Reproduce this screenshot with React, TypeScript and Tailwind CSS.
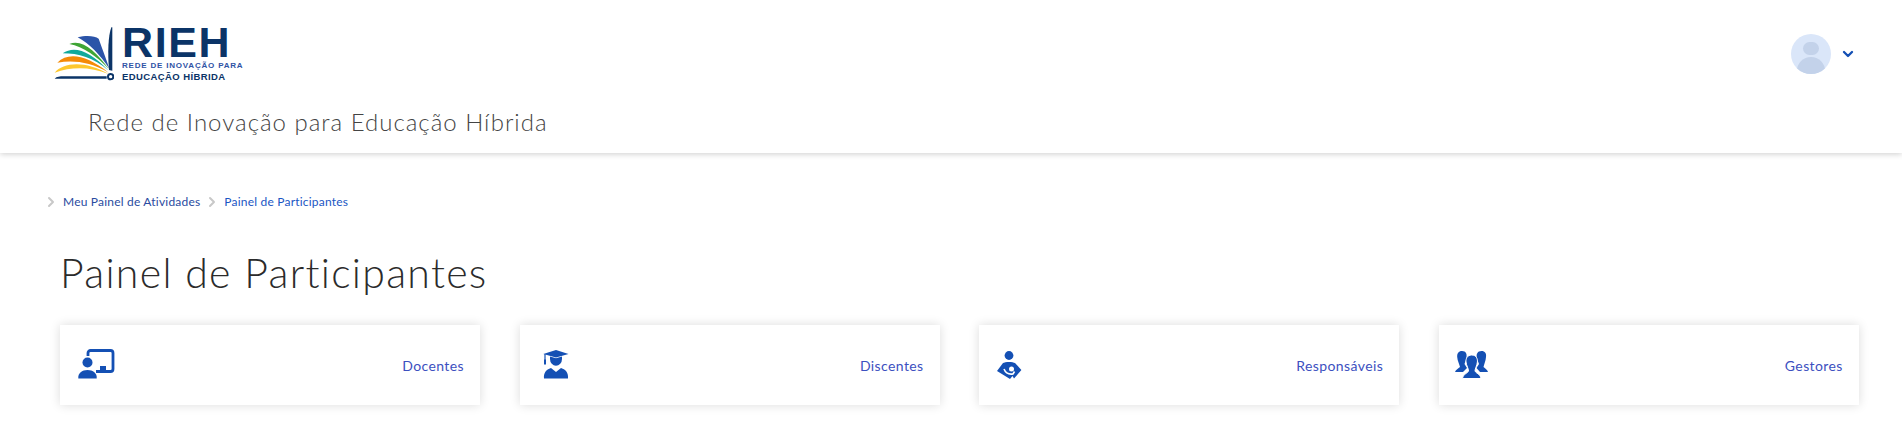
import { ChevronDown, ChevronRight } from 'lucide-react';
import type { ReactNode } from 'react';

const Logo = () => (
  <div className="flex items-start">
    <svg width="74" height="70" viewBox="0 0 222 210" className="shrink-0">
      <path d="M44 158 C70 125 140 122 206 162 C150 140 95 140 44 158Z" fill="#fdc82f" />
      <path d="M52 128 C85 95 140 105 206 158 C150 125 100 120 52 128Z" fill="#f58a07" />
      <path d="M68 100 C105 75 150 95 206 152 C160 112 115 100 68 100Z" fill="#12a99b" />
      <path d="M88 72 C125 55 170 95 207 148 C170 108 130 80 88 72Z" fill="#3fa535" />
      <path d="M113 52 C140 45 165 48 176 56 C188 90 200 120 208 146 C180 105 150 72 113 52Z" fill="#2b54a8" />
      <path d="M207 150 C203 100 204 50 214 22 L217 22 L217 152Z" fill="#0b3467" />
      <path d="M44 176 C50 170 60 169 70 169 L200 169 L200 176Z" fill="#0b3467" />
      <circle cx="212" cy="170" r="8" fill="#fff" stroke="#0b3467" strokeWidth="6" />
    </svg>
    <div className="mt-[2px] ml-[8px] flex w-[104px] flex-col font-['Liberation_Sans',sans-serif] text-[#0b3467]">
      <span className="h-[38px] text-[43px] leading-[40px] font-bold tracking-[1.6px]">RIEH</span>
      <span className="mt-[1px] text-[8px] leading-[9px] font-bold tracking-[0.8px] whitespace-nowrap text-[#2f53a5]">
        REDE DE INOVAÇÃO PARA
      </span>
      <span className="mt-[2px] text-[9.5px] leading-[10px] font-bold tracking-[0.4px] whitespace-nowrap">
        EDUCAÇÃO HÍBRIDA
      </span>
    </div>
  </div>
);

const DocentesIcon = () => (
  <svg width="40" height="32" viewBox="0 0 40 32" fill="#1450b4">
    <path d="M12 7 V4 a2.5 2.5 0 0 1 2.5-2.5 H34.5 a2.5 2.5 0 0 1 2.5 2.5 V20 a2.5 2.5 0 0 1-2.5 2.5 H20" fill="none" stroke="#1450b4" strokeWidth="2.8" />
    <rect x="24" y="17" width="6" height="5" />
    <circle cx="11.5" cy="13.5" r="5" />
    <path d="M2.3 29.5 C1.8 24 6 21 11.5 21 C17 21 21.2 24 20.7 29.5Z" />
  </svg>
);

const DiscentesIcon = () => (
  <svg width="40" height="32" viewBox="0 0 40 32" fill="#1450b4">
    <path d="M7.3 5 L20 1 L32.5 5 L20 8.5Z" />
    <path d="M14 7.5 L20 9.2 L26 7.5 V10 A6 6.8 0 0 1 14 10Z" />
    <rect x="8.4" y="5" width="1.2" height="6" />
    <rect x="8" y="10.5" width="2" height="5" />
    <path d="M8 29.5 C7.5 24 10 20.5 15 19 L20 23 L25 19 C30 20.5 32.5 24 32 29.5Z" />
  </svg>
);

const ResponsaveisIcon = () => (
  <svg width="40" height="32" viewBox="0 0 40 32" fill="#1450b4">
    <circle cx="14" cy="6.5" r="4.4" />
    <path d="M8 14 C10 12.5 18 12.5 20 14 L26.4 21 L19 29.5 L17.5 27 L15 30 L2 22Z" />
    <circle cx="16.5" cy="20" r="2.5" fill="#fff" />
    <path d="M9 20 C11 25 15 25.5 18 25 L19.5 22.5" fill="none" stroke="#fff" strokeWidth="1.6" />
  </svg>
);

const GestoresIcon = () => (
  <svg width="40" height="32" viewBox="0 0 40 32" fill="#1450b4">
    <path d="M7 2 C11 2 12 5 11.5 8 C11.2 11 10 13 9.5 15 L12 19 L8 23 H0 C0.5 20.5 3.5 19.5 5 18 C4.5 15.5 2.5 12 2.2 8 C2 4.5 3.5 2 7 2Z" />
    <path d="M26.5 2 C30 2 31.5 4.5 31 8 C30.7 12 29 15.5 28.5 18 C30 19.5 32.5 20.5 33 23 H25 L21.5 19 L24 15 C23.5 13 22 11 21.7 8 C21.3 5 22.5 2 26.5 2Z" />
    <path d="M16.7 6 C21.5 6 22.7 10 22.4 13 C22 17 20 19.5 20 22 C21 24.5 25.5 25 26 29.5 H7.5 C8 25 12.5 24.5 13.5 22 C13.5 19.5 11.5 17 11 13 C10.7 10 12 6 16.7 6Z" stroke="#fff" strokeWidth="1" />
  </svg>
);

type CardProps = {
  icon: ReactNode;
  label: string;
};

const Card = ({ icon, label }: CardProps) => (
  <div className="flex h-[80px] w-[420px] items-center justify-between bg-white pr-4 pl-4 shadow-[0_0_10px_rgba(0,0,0,0.14)]">
    <div className="mt-[-1px]">{icon}</div>
    <span className="text-[14px] tracking-[0.4px] text-[#3c50c0]">{label}</span>
  </div>
);

export default function App() {
  return (
    <div className="h-[435px] overflow-hidden bg-white font-['Lato',sans-serif]">
      <header className="relative h-[153px] bg-white shadow-[0_1px_6px_rgba(0,0,0,0.2)]">
        <div className="flex h-[90px] items-start justify-between pt-[20px] pr-[46px] pl-[40px]">
          <Logo />
          <div className="mt-[14px] flex items-center">
            <div className="flex h-[40px] w-[40px] flex-col items-center overflow-hidden rounded-full bg-[#dae6f9]">
              <div className="mt-[8px] h-[16px] w-[16px] rounded-full bg-[#c3d2ea]" />
              <div className="mt-[2px] h-[20px] w-[28px] rounded-t-full bg-[#c3d2ea]" />
            </div>
            <ChevronDown className="ml-[9px] h-[16px] w-[16px] text-[#1450b4]" strokeWidth={3.5} />
          </div>
        </div>
        <h2 className="mt-[17px] ml-[88px] text-[24px] leading-[30px] font-light tracking-[1px] text-[#444]">
          Rede de Inovação para Educação Híbrida
        </h2>
      </header>
      <nav className="mt-[40px] flex h-[18px] items-center pl-[43px] text-[12px] leading-[18px] tracking-[0.2px]">
        <ChevronRight className="h-[16px] w-[16px] text-[#c8c8c8]" strokeWidth={3} />
        <span className="ml-[4px] text-[#2a4ba0]">Meu Painel de Atividades</span>
        <ChevronRight className="ml-[4px] h-[16px] w-[16px] text-[#c8c8c8]" strokeWidth={3} />
        <span className="ml-[4px] text-[#1a56c4]">Painel de Participantes</span>
      </nav>
      <h1 className="mt-[37px] pl-[60px] text-[41px] leading-[50px] font-light tracking-[1.3px] text-[#2b2b2b]">
        Painel de Participantes
      </h1>
      <main className="mt-[27px] flex gap-[39.6px] pl-[60px]">
        <Card icon={<DocentesIcon />} label="Docentes" />
        <Card icon={<DiscentesIcon />} label="Discentes" />
        <Card icon={<ResponsaveisIcon />} label="Responsáveis" />
        <Card icon={<GestoresIcon />} label="Gestores" />
      </main>
    </div>
  );
}
